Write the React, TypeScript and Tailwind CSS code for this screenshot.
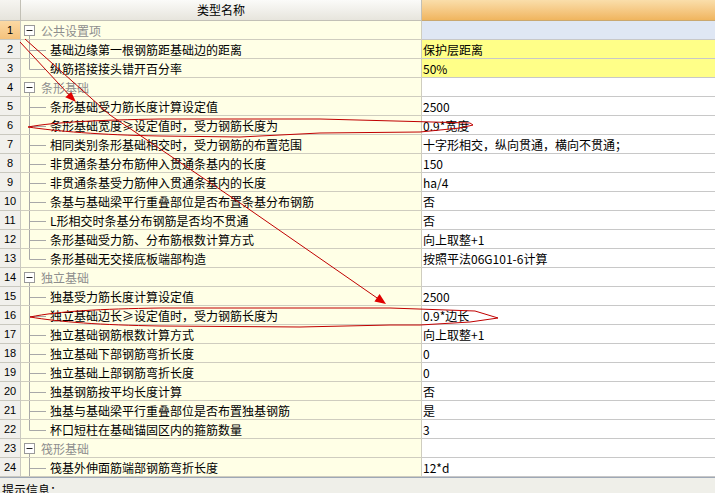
import React from "react";

type Row = {
    kind: "group" | "child" | "last";
    name: string;
    value?: string;
    valueBg?: string;
};

const rows: Row[] = [
    {kind: "group", name: "公共设置项", valueBg: "bg-[#dfe7f4]"},
    {kind: "child", name: "基础边缘第一根钢筋距基础边的距离", value: "保护层距离", valueBg: "bg-[#ffff88]"},
    {kind: "last", name: "纵筋搭接接头错开百分率", value: "50%", valueBg: "bg-[#ffff88]"},
    {kind: "group", name: "条形基础"},
    {kind: "child", name: "条形基础受力筋长度计算设定值", value: "2500"},
    {kind: "child", name: "条形基础宽度≥设定值时，受力钢筋长度为", value: "0.9*宽度"},
    {kind: "child", name: "相同类别条形基础相交时，受力钢筋的布置范围", value: "十字形相交，纵向贯通，横向不贯通；"},
    {kind: "child", name: "非贯通条基分布筋伸入贯通条基内的长度", value: "150"},
    {kind: "child", name: "非贯通条基受力筋伸入贯通条基内的长度", value: "ha/4"},
    {kind: "child", name: "条基与基础梁平行重叠部位是否布置条基分布钢筋", value: "否"},
    {kind: "child", name: "L形相交时条基分布钢筋是否均不贯通", value: "否"},
    {kind: "child", name: "条形基础受力筋、分布筋根数计算方式", value: "向上取整+1"},
    {kind: "last", name: "条形基础无交接底板端部构造", value: "按照平法06G101-6计算"},
    {kind: "group", name: "独立基础"},
    {kind: "child", name: "独基受力筋长度计算设定值", value: "2500"},
    {kind: "child", name: "独立基础边长≥设定值时，受力钢筋长度为", value: "0.9*边长"},
    {kind: "child", name: "独立基础钢筋根数计算方式", value: "向上取整+1"},
    {kind: "child", name: "独立基础下部钢筋弯折长度", value: "0"},
    {kind: "child", name: "独立基础上部钢筋弯折长度", value: "0"},
    {kind: "child", name: "独基钢筋按平均长度计算", value: "否"},
    {kind: "child", name: "独基与基础梁平行重叠部位是否布置独基钢筋", value: "是"},
    {kind: "last", name: "杯口短柱在基础锚固区内的箍筋数量", value: "3"},
    {kind: "group", name: "筏形基础"},
    {kind: "child", name: "筏基外伸面筋端部钢筋弯折长度", value: "12*d"},
];

const TreeGlyph = ({kind}: { kind: Row["kind"] }) => {
    if (kind === "group") {
        return (
            <svg width="20" height="18" className="shrink-0">
                <line x1="8.5" y1="14" x2="8.5" y2="18" stroke="#a8a8a8"/>
                <rect x="3.5" y="4.5" width="10" height="10" fill="#ffffff" stroke="#9a9a9a"/>
                <line x1="5.5" y1="9.5" x2="11.5" y2="9.5" stroke="#222"/>
            </svg>
        );
    }
    return (
        <svg width="29" height="18" className="shrink-0">
            <line x1="8.5" y1="0" x2="8.5" y2={kind === "last" ? 10.5 : 18} stroke="#a8a8a8"/>
            <line x1="8.5" y1="10.5" x2="25" y2="10.5" stroke="#a8a8a8"/>
        </svg>
    );
};

const GridRow = ({row, index}: { row: Row; index: number }) => {
    const selected = index === 0;
    return (
        <div className="flex h-[19px]">
            <div
                className={
                    "w-[21px] shrink-0 border-r border-b border-[#c9c8bf] flex items-center justify-center font-['Liberation_Sans',sans-serif] text-[11px] text-black " +
                    (selected ? "bg-gradient-to-b from-[#fbd9a4] to-[#f5c27c]" : "bg-[#f1f0ec]")
                }
            >
                {index + 1}
            </div>
            <div className="w-[401px] shrink-0 border-r border-b border-[#cfcdbf] bg-[#ffffe6] flex items-center">
                <TreeGlyph kind={row.kind}/>
                <span className={"whitespace-nowrap pt-[1px] " + (row.kind === "group" ? "text-[#8e8e8e]" : "text-black")}>
                    {row.name}
                </span>
            </div>
            <div className={"flex-1 border-b border-[#c8c8c8] flex items-center pl-[1px] whitespace-nowrap pt-[1px] " + (row.valueBg ?? "bg-white")}>
                {row.value}
            </div>
        </div>
    );
};

const Annotations = () => (
    <svg width="715" height="493" className="absolute inset-0 pointer-events-none">
        <g fill="none" stroke="#c00000" strokeWidth="1">
            <path d="M20 42 L72 98"/>
            <path d="M25 39 L110 115 L240 203 L380 300"/>
            <path
                d="M28 127 C55 122 100 120 160 119 L320 119 L470 123 L473 125 L460 128 L420 132 L320 133 L240 137 L160 136 C100 135 55 131 28 127 Z"/>
            <path
                d="M30 317 C60 311 100 309 160 308 L390 308 L475 311 L498 318 L470 322 L420 325 L390 325 L300 327 L160 326 C100 325 60 322 30 317 Z"/>
        </g>
        <g fill="#e00000">
            <polygon points="76,102 65.3,97.3 71.3,91.9"/>
            <polygon points="386,304 374.4,301.4 379.6,294"/>
        </g>
    </svg>
);

export default function App() {
    return (
        <div className="relative w-[715px] h-[493px] overflow-hidden bg-[#efefe9] font-['Noto_Sans_CJK_SC',sans-serif] text-[12px] leading-[18px] text-black">
            <div className="flex h-[21px]">
                <div className="w-[21px] shrink-0 border-r border-b border-[#c2c0b6] bg-gradient-to-b from-[#f6f5f1] to-[#e6e4dc]"/>
                <div className="w-[401px] shrink-0 border-r border-b border-[#c2c0b6] bg-gradient-to-b from-[#fbfbf9] to-[#e7e5dd] flex items-center justify-center">
                    类型名称
                </div>
                <div className="flex-1 border-b border-[#c9a870] bg-gradient-to-b from-[#fadeaa] to-[#f0b55e]"/>
            </div>
            {rows.map((row, i) => (
                <GridRow key={i} row={row} index={i}/>
            ))}
            <div className="border-t border-[#9ea8b6] pl-[2px] pt-[3px] whitespace-nowrap">
                提示信息：
            </div>
            <Annotations/>
        </div>
    );
}
